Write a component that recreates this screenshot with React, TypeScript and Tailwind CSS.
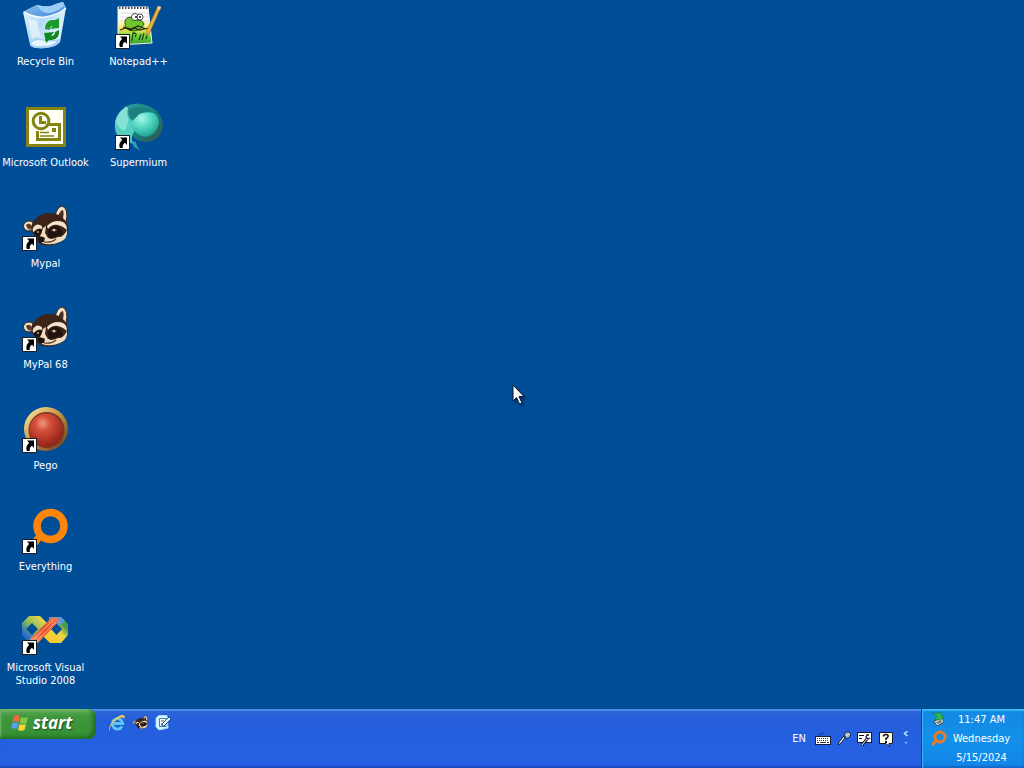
import type { ReactNode } from 'react';

function ShortcutBadge() {
  return (
    <g>
      <rect x="1.500" y="32.500" width="14" height="14" fill="#fff" stroke="#1b2028" strokeWidth="1" />
      <path d="M6 34.500H13V42L11 39.800C9 41 8.500 42.500 8.800 45H6C4.500 42 5.800 39 8.200 37Z" fill="#000" />
    </g>
  );
}

function DesktopGlyph({ children }: { children: ReactNode }) {
  return (
    <svg viewBox="0 0 48 48" className="mr-px size-12 overflow-visible" aria-hidden="true">
      {children}
    </svg>
  );
}

function RecycleBinIcon() {
  return (
    <DesktopGlyph>
      <defs>
        <linearGradient id="bin" x1="0" y1="0" x2="1" y2="0.6">
          <stop offset="0" stopColor="#e3f4ff" />
          <stop offset="0.5" stopColor="#b4dcf6" />
          <stop offset="1" stopColor="#e2f4ff" />
        </linearGradient>
        <linearGradient id="bin-inside" x1="0" y1="0" x2="1" y2="1">
          <stop offset="0" stopColor="#8fc3f2" />
          <stop offset="1" stopColor="#3f86d4" />
        </linearGradient>
      </defs>
      <path d="M2 10Q9 6 16 3Q23 5 30 4Q37 1 42 0L45 6L39 40Q35 45 24 46Q12 47 9 43Z" fill="url(#bin)" />
      <path d="M3 10Q9 6 16 3Q23 5 30 4Q37 1 42 0L44 6Q35 14 24 15Q12 16 3 10Z" fill="url(#bin-inside)" />
      <path d="M16 3Q23 5 30 4Q37 1 42 0L43 4Q33 12 25 11Q19 9 16 3Z" fill="#9bcdf5" />
      <path d="M3 10Q13 16 24 15Q37 13 45 6" fill="none" stroke="#f4fbff" strokeWidth="1.500" />
      <path d="M7 17L11 37Q16 33 20 36L16 19Z" fill="#fff" opacity="0.5" />
      <path d="M9 40Q14 35 23 37Q32 39 39 37L38 41Q35 45 24 46Q12 47 9 43Z" fill="#a8d1f1" />
      <path d="M10 41Q14 37 22 38.500Q30 40 36 39Q32 44 22 44Q12 45 10 41Z" fill="#e8f6ff" />
      <path d="M24 27Q24 20 30 18L34 18L38 16V26L29 27L31.500 24Q29 24 28.500 28Z" fill="#1c9a2c" />
      <path d="M38 28Q39 37 31 38H28L25 41L23 31L33 30L30 34Q34 34 34 30Z" fill="#138821" />
    </DesktopGlyph>
  );
}

function NotepadIcon() {
  return (
    <DesktopGlyph>
      <defs>
        <linearGradient id="page" x1="0" y1="0" x2="0" y2="1">
          <stop offset="0.3" stopColor="#fff" />
          <stop offset="0.58" stopColor="#f4ea55" />
          <stop offset="0.75" stopColor="#7bd43c" />
          <stop offset="1" stopColor="#2f9a30" />
        </linearGradient>
      </defs>
      <path d="M4 5L34 5L38 41L4 43Z" fill="url(#page)" stroke="#f2f2ea" strokeWidth="1" />
      <path d="M5 6H34" stroke="#4a4a4a" strokeWidth="2" strokeDasharray="1.500 1.500" />
      <path d="M6 11H34M6 15H34M6 19H35" stroke="#cdd5df" strokeWidth="0.800" />
      <path d="M11 22Q10 16 16 15L22 18Q29 18 30 22Q28 28 19 29Q11 28 11 22Z" fill="#70c62d" stroke="#242a10" strokeWidth="0.800" />
      <path d="M6 28L12 26L16 28L21 26L25 28L35 26M9 25L17 27L24 24L32 27" stroke="#252510" strokeWidth="1.200" fill="none" />
      <circle cx="21" cy="15" r="3.500" fill="#fff" stroke="#222" strokeWidth="0.800" />
      <circle cx="26" cy="15" r="3" fill="#fff" stroke="#222" strokeWidth="0.800" />
      <circle cx="22" cy="15" r="1" fill="#111" />
      <circle cx="26" cy="15" r="1" fill="#111" />
      <path d="M18 39L19 31Q24 31 21 35M25 38L27 32M28 38L30 31M32 37L33 33" stroke="#164f14" strokeWidth="1.300" fill="none" />
      <path d="M44 4L47 5L36 30L32 34L33 28Z" fill="#eab43c" stroke="#9f6920" strokeWidth="0.600" />
      <path d="M44 4L47 5L46 8L43 7Z" fill="#edce8f" />
      <ShortcutBadge />
    </DesktopGlyph>
  );
}

function OutlookIcon() {
  return (
    <DesktopGlyph>
      <rect x="5" y="4" width="40" height="40" fill="#858413" />
      <rect x="8" y="7" width="34" height="34" fill="#fffff6" />
      <path d="M28 21.500H38.500V36.500H16.500V28" fill="none" stroke="#858413" strokeWidth="3" />
      <circle cx="20" cy="18" r="7.800" fill="#fffff6" stroke="#858413" strokeWidth="3" />
      <path d="M19.500 13V19.500H25" fill="none" stroke="#858413" strokeWidth="3" />
      <rect x="31" y="25" width="4" height="4" fill="#858413" />
      <path d="M19 29.500H28M19 33H33" stroke="#858413" strokeWidth="1.500" />
    </DesktopGlyph>
  );
}

function SupermiumIcon() {
  return (
    <DesktopGlyph>
      <defs>
        <radialGradient id="sphere" cx="0.35" cy="0.25" r="0.8">
          <stop offset="0" stopColor="#a6f8e6" />
          <stop offset="0.45" stopColor="#55d9c4" />
          <stop offset="1" stopColor="#159c8b" />
        </radialGradient>
        <linearGradient id="shell" x1="0" y1="0" x2="1" y2="1">
          <stop offset="0" stopColor="#2c9c9d" />
          <stop offset="0.55" stopColor="#167e78" />
          <stop offset="1" stopColor="#3a4f52" />
        </linearGradient>
      </defs>
      <path d="M10 4Q23-3 37 4Q49 11 49 23Q47 37 34 39Q24 40 17 31Z" fill="url(#shell)" />
      <path d="M12 4Q3 9 1 19Q0 30 5 34L19 41Q16 35 20 29Q24 24 18 18Q12 12 14 5Z" fill="#55cdbf" />
      <path d="M12 4Q4 9 1.500 18Q5 26 10 28Q15 22 14 15Q12 10 14 5Z" fill="#84e2d5" />
      <path d="M18 38L20 44L27 48Q22 43 22 39Z" fill="#2f9ca8" />
      <path d="M18 18Q22 15 25 11Q32 8 40 10Q45 14 45 20Q43 32 32 34Q22 33 18 24Z" fill="url(#sphere)" />
      <path d="M15 7Q25 1 39 8Q32 7 25 11Q21 16 16 14Z" fill="#1c7e80" />
      <ShortcutBadge />
    </DesktopGlyph>
  );
}

function RaccoonFace() {
  return (
    <g>
      <ellipse cx="8" cy="22" rx="5.500" ry="5" fill="#f2dfc3" stroke="#3a2115" strokeWidth="1" />
      <path d="M5 21Q8 18 11 22L9 26Q6 25 5 21Z" fill="#5a3a28" />
      <path d="M34 12Q36 3 41 2Q48 4 45 19L39 20Z" fill="#f4e0c6" stroke="#3a2115" strokeWidth="1" />
      <path d="M37 13Q39 6 42 6Q43.500 11 41 17Z" fill="#4a2d1f" />
      <path d="M10 24Q12 12 25 9Q37 8 43 15Q48 20 47 28Q44 38 35 40Q26 43 19 40Q14 36 14 31Q10 29 10 24Z" fill="#3e2418" />
      <path d="M12 24Q15 19 19 21Q22 22 21 25Q17 23 13 28Q11 27 12 24Z" fill="#f1dfc4" />
      <path d="M26 22Q33 15 42 18Q46 20 46 26Q42 22 37 21Q31 20 27 25Z" fill="#f5e5cd" />
      <path d="M22 24L25 22L24 29L27 34Q32 36 37 33Q42 34 46 26Q47 35 39 38Q29 42 21 39Q22 34 19 32Q21 29 22 24Z" fill="#efdcc1" />
      <path d="M27 26Q32 20 38 23Q42 26 41 31Q34 32 30 35Q26 33 27 26Z" fill="#21140f" />
      <path d="M13 28Q17 23 21 26Q20 31 16 33Q13 32 13 28Z" fill="#21140f" />
      <path d="M30 26Q33 23 36 26L33 28Z" fill="#90694b" />
      <circle cx="33" cy="26" r="0.900" fill="#fff0d4" />
      <circle cx="17" cy="28" r="0.900" fill="#d7b697" />
      <path d="M17 34Q20 31 24 34L23 38H18Z" fill="#171412" />
      <path d="M23 38Q31 39 35 35" fill="none" stroke="#60402c" strokeWidth="1.200" />
    </g>
  );
}

function MypalIcon() {
  return (
    <DesktopGlyph>
      <RaccoonFace />
      <ShortcutBadge />
    </DesktopGlyph>
  );
}

function PegoIcon() {
  return (
    <DesktopGlyph>
      <defs>
        <linearGradient id="rim" x1="0" y1="0" x2="1" y2="1">
          <stop offset="0.1" stopColor="#f5dc91" />
          <stop offset="0.5" stopColor="#bf8f42" />
          <stop offset="0.9" stopColor="#714526" />
        </linearGradient>
        <radialGradient id="gem" cx="0.4" cy="0.3" r="0.75">
          <stop offset="0" stopColor="#f09a83" />
          <stop offset="0.3" stopColor="#d4513b" />
          <stop offset="1" stopColor="#8f1d12" />
        </radialGradient>
      </defs>
      <circle cx="25" cy="23" r="22" fill="url(#rim)" />
      <circle cx="25.500" cy="24" r="18" fill="#7c3822" />
      <circle cx="25" cy="24" r="16.500" fill="url(#gem)" />
      <ShortcutBadge />
    </DesktopGlyph>
  );
}

function EverythingIcon() {
  return (
    <DesktopGlyph>
      <path d="M19 29L12 38" stroke="#ff8508" strokeWidth="7" />
      <circle cx="29.500" cy="19" r="13.500" fill="none" stroke="#ff8508" strokeWidth="7.500" />
      <ShortcutBadge />
    </DesktopGlyph>
  );
}

function VisualStudioIcon() {
  return (
    <DesktopGlyph>
      <defs>
        <linearGradient id="ribbon" x1="1" y1="0" x2="0" y2="1">
          <stop offset="0" stopColor="#f9804c" />
          <stop offset="0.5" stopColor="#e2502f" />
          <stop offset="1" stopColor="#f9a061" />
        </linearGradient>
        <linearGradient id="left-link" x1="0" y1="1" x2="1" y2="0">
          <stop offset="0.2" stopColor="#2c6cc4" />
          <stop offset="0.5" stopColor="#8fbf58" />
          <stop offset="0.85" stopColor="#f8d650" />
        </linearGradient>
        <linearGradient id="right-link" x1="0" y1="1" x2="1" y2="0">
          <stop offset="0.2" stopColor="#fbc72d" />
          <stop offset="0.55" stopColor="#ecd541" />
          <stop offset="0.75" stopColor="#4e9b4d" />
        </linearGradient>
      </defs>
      <path d="M8 8H19L29 18L23 25L14 34H8L1 27V15ZM11 15L5 21L11 27L17 21Z" fill="url(#left-link)" fillRule="evenodd" />
      <path d="M30 9H40L47 16V27L40 35H29L20 26L29 17ZM35.500 15L30 21L35.500 27L41 21Z" fill="url(#right-link)" fillRule="evenodd" />
      <path d="M28 9H40L44 13L38 18L34 14L28 18Z" fill="#5d9bdc" />
      <path d="M9 31L30 10Q35 8 38 12L36 15L17 35H12Z" fill="url(#ribbon)" />
      <path d="M12 32L32 12M15 34L35 14" stroke="#ffb58a" strokeWidth="0.800" />
      <ShortcutBadge />
    </DesktopGlyph>
  );
}

type Item = { label: string; icon: ReactNode };

const columns: Item[][] = [
  [
    { label: 'Recycle Bin', icon: <RecycleBinIcon /> },
    { label: 'Microsoft Outlook', icon: <OutlookIcon /> },
    { label: 'Mypal', icon: <MypalIcon /> },
    { label: 'MyPal 68', icon: <MypalIcon /> },
    { label: 'Pego', icon: <PegoIcon /> },
    { label: 'Everything', icon: <EverythingIcon /> },
    { label: 'Microsoft Visual Studio 2008', icon: <VisualStudioIcon /> },
  ],
  [
    { label: 'Notepad++', icon: <NotepadIcon /> },
    { label: 'Supermium', icon: <SupermiumIcon /> },
  ],
];

function WindowsFlag() {
  return (
    <svg viewBox="0 0 18 18" className="size-[18px]" aria-hidden="true">
      <path d="M3 2Q6 0 9 2L7.500 8Q5 6.500 1.500 8Z" fill="#f3653a" />
      <path d="M10 3Q13 4.500 17 3L15.500 9Q12 10.500 8.500 9Z" fill="#82c944" />
      <path d="M1.500 9Q5 7.500 7.500 9L6 15Q3 13.500 0 15Z" fill="#5c9cf3" />
      <path d="M8.500 10Q12 11.500 15 10L13.500 16Q10 17.500 7 16Z" fill="#fbd43f" />
    </svg>
  );
}

function ExplorerIcon() {
  return (
    <svg viewBox="0 0 18 18" className="size-[18px]" aria-hidden="true">
      <circle cx="9.500" cy="9.500" r="5.500" fill="#1c62c4" />
      <path d="M14 12.500A5.200 5.200 0 1 1 14.700 9.500H6" fill="none" stroke="#5cc4fa" strokeWidth="2.800" />
      <path d="M2 17C-1 15 4 6 11 2C15 0 18 1 16 5C15 2 10 4 6 8C3 11 1 14 2 17Z" fill="#f1c955" />
    </svg>
  );
}

function DesktopIcon() {
  return (
    <svg viewBox="0 0 18 18" className="size-[18px]" aria-hidden="true">
      <path d="M2 4L5 1.500H13L14 14L5 16L2 13Z" fill="#d9f4ff" stroke="#a4dcf7" />
      <path d="M5.500 4.500H12V12.500H5.500Z" fill="#fff" stroke="#3486b2" />
      <path d="M8 10L15 3L17 5L10 12H8Z" fill="#e2f4ff" stroke="#204f79" />
      <path d="M7 7H10M7 10H9" stroke="#24658d" />
    </svg>
  );
}

function KeyboardIcon() {
  return (
    <svg viewBox="0 0 16 16" className="size-4" aria-hidden="true">
      <path d="M4 5V3H8V1" fill="none" stroke="#173982" />
      <rect x="0.500" y="5.500" width="15" height="8" fill="#fff" stroke="#14213c" />
      <path d="M2 7.500H14M2 9.500H14" stroke="#333" strokeDasharray="1 1" />
      <path d="M2 11.500H4M5 11.500H11M12 11.500H14" stroke="#333" />
    </svg>
  );
}

function MicrophoneIcon() {
  return (
    <svg viewBox="0 0 16 16" className="size-4" aria-hidden="true">
      <path d="M9 7L4 13L2 14L3 11L8 5Z" fill="#f1efe9" stroke="#162342" />
      <path d="M8 4L10 1H13L15 4L11 8Z" fill="#a6b6ca" stroke="#172d55" />
      <path d="M10 3L13 6M12 2L14 4" stroke="#e3e8ee" />
    </svg>
  );
}

function ToolsIcon() {
  return (
    <svg viewBox="0 0 16 16" className="size-4" aria-hidden="true">
      <rect x="0.500" y="1.500" width="14" height="10" fill="#fff" stroke="#121a2c" />
      <path d="M2 4.500H7M2 7.500H5" stroke="#111" />
      <path d="M5 14L10 8" stroke="#121a2c" strokeWidth="3" />
      <path d="M5 14L10 8" stroke="#fff" />
      <path d="M12 4L10 4L9 6L11 8L13 7" fill="none" stroke="#121a2c" strokeWidth="1.300" />
    </svg>
  );
}

function HelpIcon() {
  return (
    <svg viewBox="0 0 16 16" className="size-4" aria-hidden="true">
      <path d="M1.500 1.500H14.500V12.500H11V15.500L8 12.500H1.500Z" fill="#fffdf0" stroke="#131a29" />
      <path d="M5.500 5.500Q5.500 3.500 8 3.500Q10.500 3.500 10 5.500Q9.500 7 8 7.500V9" fill="none" stroke="#111" strokeWidth="1.600" />
      <rect x="7" y="10" width="2" height="2" fill="#111" />
    </svg>
  );
}

function DeviceIcon() {
  return (
    <svg viewBox="0 0 16 16" className="size-4" aria-hidden="true">
      <path d="M3 10L11 7L13 11L6 15Z" fill="#d6dbd3" stroke="#475057" />
      <path d="M5 11L10 9L11 11L7 13Z" fill="#777f7b" />
      <path d="M1 1L5 3L9 1L11 5L13 6L9 9L3 8L6 6Z" fill="#32b84a" stroke="#147a34" strokeWidth="0.600" />
    </svg>
  );
}

function SearchIcon() {
  return (
    <svg viewBox="0 0 16 16" className="size-4" aria-hidden="true">
      <path d="M6 10L1 15" stroke="#ed7b22" strokeWidth="3" />
      <circle cx="9" cy="7" r="5" fill="none" stroke="#ed7b22" strokeWidth="3" />
    </svg>
  );
}

const quickLaunch: Item[] = [
  { label: 'Internet Explorer', icon: <ExplorerIcon /> },
  {
    label: 'Mypal',
    icon: (
      <svg viewBox="0 0 48 48" className="size-4" aria-hidden="true">
        <RaccoonFace />
      </svg>
    ),
  },
  { label: 'Show Desktop', icon: <DesktopIcon /> },
];

const languageBar: Item[] = [
  { label: 'Keyboard', icon: <KeyboardIcon /> },
  { label: 'Microphone', icon: <MicrophoneIcon /> },
  { label: 'Speech Tools', icon: <ToolsIcon /> },
  { label: 'Help', icon: <HelpIcon /> },
];

export default function App() {
  return (
    <div className="relative flex min-h-screen flex-col bg-[#004e98] font-['DejaVu_Sans_Condensed','DejaVu_Sans',sans-serif] text-[11px] leading-[13px] text-white select-none">
      <main className="flex flex-1 items-start gap-[2px]">
        {columns.map((items, index) => (
          <ul key={index} className="flex w-[91px] flex-col">
            {items.map(({ label, icon }) => (
              <li key={label} className="h-[101px]">
                <button type="button" className="flex w-full flex-col items-center gap-[5px] pt-[2px]">
                  {icon}
                  <span>{label}</span>
                </button>
              </li>
            ))}
          </ul>
        ))}
      </main>

      <footer className="flex h-[59px] bg-linear-to-b from-[#2b67d5] from-0% via-[#245edb] via-20% to-[#2562e5] shadow-[inset_0_2px_1px_#4b8cf1,inset_0_-2px_2px_#1b49bd]">
        <button
          type="button"
          className="flex h-[30px] w-24 items-center gap-1 rounded-r-lg bg-linear-to-b from-[#5eac57] via-[#3f983f] via-25% to-[#348f31] pb-[2px] pl-[11px] font-['Open_Sans','Noto_Sans',sans-serif] text-[17px] leading-5 font-bold italic shadow-[inset_-3px_-2px_4px_#206b22,inset_1px_2px_2px_#79bd71] [text-shadow:1px_1px_2px_#174b18]"
        >
          <WindowsFlag />
          <span>start</span>
        </button>
        <nav aria-label="Quick Launch" className="flex h-[28px] items-center gap-[5px] pl-3">
          {quickLaunch.map(({ label, icon }) => (
            <button key={label} type="button" aria-label={label} className="flex size-[18px] items-center justify-center">
              {icon}
            </button>
          ))}
        </nav>

        <div className="ml-auto flex items-center gap-[5px] pr-3">
          <button type="button" className="mr-1">EN</button>
          {languageBar.map(({ label, icon }) => (
            <button key={label} type="button" aria-label={label} className="flex size-4 items-center justify-center">
              {icon}
            </button>
          ))}
          <svg viewBox="0 0 6 16" className="ml-1 h-4 w-[6px]" aria-hidden="true">
            <path d="M4.500 0L1.500 2.500L4.500 5" fill="none" stroke="#c9eaff" strokeWidth="1.500" />
            <path d="M2 11H4L3 13Z" fill="#c9eaff" />
          </svg>
        </div>

        <aside aria-label="Notification area" className="flex w-[103px] gap-1 border-l border-[#123f9f] bg-linear-to-b from-[#1388e5] via-[#1290ea] to-[#1285e8] pt-px pl-[9px] shadow-[inset_1px_2px_1px_#3db7f4,inset_0_-2px_2px_#1468cb]">
          <div className="flex flex-col gap-[3px] pt-px">
            <button type="button" aria-label="Safely Remove Hardware"><DeviceIcon /></button>
            <button type="button" aria-label="Everything"><SearchIcon /></button>
          </div>
          <time className="flex flex-1 flex-col items-center pr-3 text-center leading-[19px]" dateTime="2024-05-15T11:47">
            <span>11:47 AM</span>
            <span>Wednesday</span>
            <span>5/15/2024</span>
          </time>
        </aside>
      </footer>

      <svg viewBox="0 0 14 22" className="pointer-events-none absolute top-1/2 left-1/2 h-[22px] w-[14px] drop-shadow-[2px_2px_1px_#002f6b]" aria-hidden="true">
        <path d="M1 1V17L4.500 13.500L7.500 20L10 19L7 12.500H12Z" fill="#fff" stroke="#0a1423" strokeWidth="1" />
      </svg>
    </div>
  );
}
